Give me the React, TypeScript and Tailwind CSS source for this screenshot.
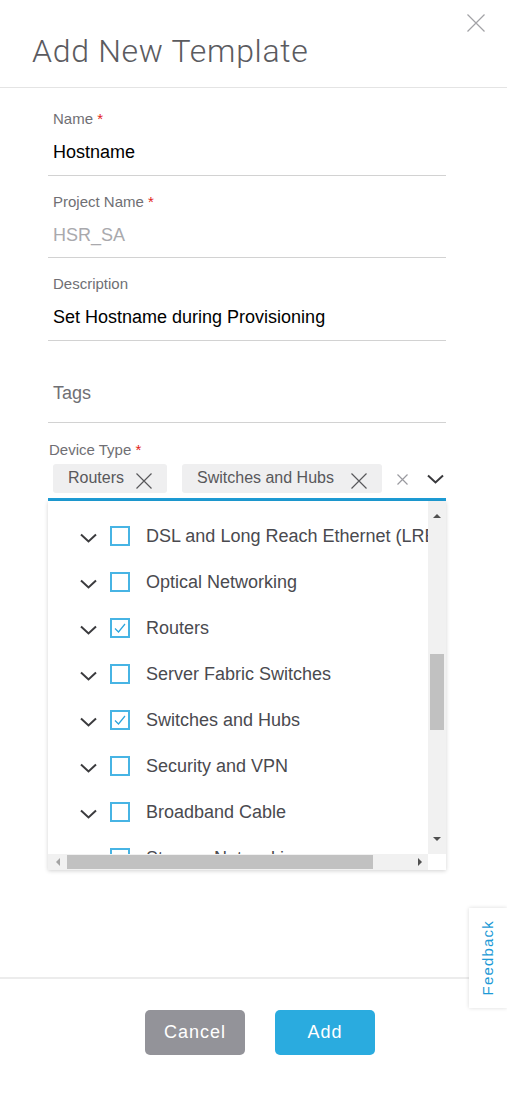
const font = { fontFamily: '"Liberation Sans", Arial, sans-serif' };

const devices = [
  { name: "DSL and Long Reach Ethernet (LRE)", checked: false },
  { name: "Optical Networking", checked: false },
  { name: "Routers", checked: true },
  { name: "Server Fabric Switches", checked: false },
  { name: "Switches and Hubs", checked: true },
  { name: "Security and VPN", checked: false },
  { name: "Broadband Cable", checked: false },
  { name: "Storage Networking", checked: false }
];

function Chevron({ className = "" }: { className?: string }) {
  return (
    <svg width="17" height="10" viewBox="0 0 17 10" className={className}>
      <path d="M1 1.5 L8.5 8.5 L16 1.5" fill="none" stroke="currentColor" strokeWidth="2" />
    </svg>
  );
}

function Cross({ size, color, className = "" }: { size: number; color: string; className?: string }) {
  return (
    <svg width={size} height={size} viewBox={`0 0 ${size} ${size}`} className={className}>
      <path
        d={`M0.5 0.5 L${size - 0.5} ${size - 0.5} M${size - 0.5} 0.5 L0.5 ${size - 0.5}`}
        stroke={color}
        strokeWidth="1.2"
      />
    </svg>
  );
}

function Checkbox({ checked }: { checked: boolean }) {
  return (
    <span className="flex h-[20px] w-[20px] shrink-0 items-center justify-center border-2 border-[#47b4e4]">
      {checked && (
        <svg width="14" height="12" viewBox="0 0 14 12">
          <path d="M2 6.5 L5.5 10 L12 2" fill="none" stroke="#2aa4dc" strokeWidth="1.2" />
        </svg>
      )}
    </span>
  );
}

function Field({
  label,
  value,
  required,
  muted,
  top
}: {
  label: string;
  value: string;
  required?: boolean;
  muted?: boolean;
  top: string;
}) {
  return (
    <div className={`border-b border-[#d2d2d2] pl-[5px] ${top}`}>
      <div className="text-[15px] leading-[18px] text-[#6f6f74]">
        {label}
        {required && <span className="text-[#e2231a]"> *</span>}
      </div>
      <div
        className={`mt-[13px] text-[18px] leading-[22px] ${muted ? "text-[#a9a9ad]" : "text-black"}`}
      >
        {value}
      </div>
    </div>
  );
}

function Chip({ label, width }: { label: string; width: string }) {
  return (
    <div
      className={`flex h-[29px] items-center justify-between rounded-[3px] bg-[#efeff0] pl-[15px] pr-[15px] text-[16px] text-[#58585b] ${width}`}
    >
      <span className="-mt-[2px]">{label}</span>
      <Cross size={16} color="#58585b" className="mt-[4px]" />
    </div>
  );
}

export default function App() {
  return (
    <div style={font} className="relative flex h-[1097px] w-[507px] flex-col overflow-hidden bg-white">
      <div className="h-[88px] shrink-0 border-b border-[#e4e4e4] pl-[32px] pt-[32px]">
        <h1
          style={{ fontFamily: 'Roboto, "Liberation Sans", sans-serif' }}
          className="text-[32px] font-light leading-[38px] tracking-[0.7px] text-[#5b5b5f]"
        >
          Add New Template
        </h1>
      </div>
      <button className="absolute right-[22px] top-[14px] h-[18px] w-[18px]">
        <Cross size={18} color="#a2a2a6" />
      </button>

      <div className="flex-1 pl-[48px] pr-[61px]">
        <Field label="Name" value="Hostname" required top="pt-[22px] pb-[12px]" />
        <Field label="Project Name" value="HSR_SA" required muted top="pt-[17px] pb-[11px]" />
        <Field label="Description" value="Set Hostname during Provisioning" top="pt-[17px] pb-[12px]" />
        <div className="border-b border-[#d2d2d2] pb-[18px] pl-[5px] pt-[41px] text-[18px] leading-[22px] text-[#6f6f74]">
          Tags
        </div>

        <div className="pt-[18px]">
          <div className="pl-[1px] text-[15px] leading-[18px] text-[#6f6f74]">
            Device Type <span className="text-[#e2231a]">*</span>
          </div>
          <div className="mt-[5px] flex items-center pl-[5px]">
            <div className="flex gap-[15px]">
              <Chip label="Routers" width="w-[114px]" />
              <Chip label="Switches and Hubs" width="w-[200px]" />
            </div>
            <Cross size={11} color="#9a9aa0" className="ml-[15px] mt-[2px]" />
            <Chevron className="ml-[19px] mt-[1px] text-[#39393c]" />
          </div>
          <div className="mt-[5px] h-[3px] bg-[#1e9dd6]" />

          <div className="flex h-[369px] flex-col bg-white shadow-[0_1px_4px_rgba(0,0,0,0.18)]">
            <div className="flex min-h-0 flex-1">
              <div className="flex-1 overflow-hidden pt-[12px]">
                {devices.map((d) => (
                  <div key={d.name} className="flex h-[46px] items-center pl-[32px]">
                    <Chevron className="mt-[3px] shrink-0 text-[#3b3b3e]" />
                    <span className="ml-[13px]">
                      <Checkbox checked={d.checked} />
                    </span>
                    <span className="ml-[16px] whitespace-nowrap text-[18px] text-[#4a4a4f]">{d.name}</span>
                  </div>
                ))}
              </div>
              <div className="flex w-[18px] shrink-0 flex-col bg-[#f1f1f1]">
                <div className="flex h-[17px] items-end justify-center">
                  <span className="h-0 w-0 border-x-[4px] border-b-[4px] border-x-transparent border-b-[#505050]" />
                </div>
                <div className="flex-1 px-[2px] pt-[136px]">
                  <div className="h-[76px] bg-[#c1c1c1]" />
                </div>
                <div className="flex h-[17px] items-start justify-center">
                  <span className="h-0 w-0 border-x-[4px] border-t-[4px] border-x-transparent border-t-[#505050]" />
                </div>
              </div>
            </div>
            <div className="flex h-[16px] shrink-0">
              <div className="flex flex-1 items-center bg-[#f1f1f1]">
                <div className="flex w-[19px] justify-center">
                  <span className="h-0 w-0 border-y-[4px] border-r-[4px] border-y-transparent border-r-[#a3a3a3]" />
                </div>
                <div className="h-[14px] w-[306px] bg-[#c1c1c1]" />
                <div className="flex-1" />
                <div className="flex w-[17px] justify-center">
                  <span className="h-0 w-0 border-y-[4px] border-l-[4px] border-y-transparent border-l-[#505050]" />
                </div>
              </div>
              <div className="w-[18px] bg-white" />
            </div>
          </div>
        </div>
      </div>

      <div className="flex h-[120px] shrink-0 justify-center gap-[30px] border-t-2 border-[#ececec] pl-[13px] pt-[31px]">
        <button className="h-[45px] w-[100px] rounded-[5px] bg-[#939399] text-[18px] tracking-[1px] text-white">
          Cancel
        </button>
        <button className="h-[45px] w-[100px] rounded-[5px] bg-[#2aabdf] text-[18px] tracking-[1px] text-white">
          Add
        </button>
      </div>

      <div className="absolute right-0 top-[908px] flex h-[100px] w-[38px] items-center justify-center bg-white shadow-[0_0_4px_rgba(0,0,0,0.15)]">
        <span className="rotate-180 text-[15px] tracking-[1.2px] text-[#1d9ad6] [writing-mode:vertical-rl]">
          Feedback
        </span>
      </div>
    </div>
  );
}
